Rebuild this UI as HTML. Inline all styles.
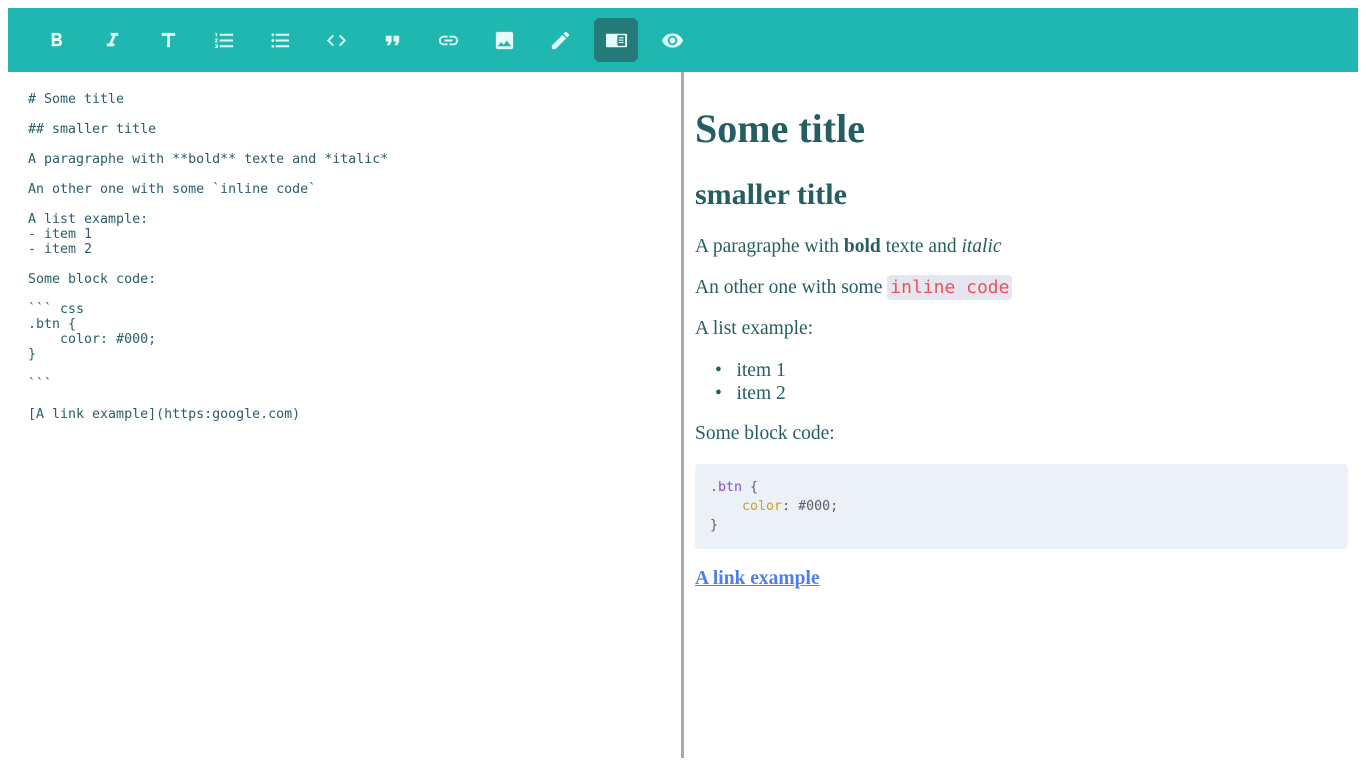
<!DOCTYPE html>
<html><head><meta charset="utf-8"><style>
html,body{margin:0;padding:0;background:#fff;width:1366px;height:768px;overflow:hidden;position:relative}
.bar{position:absolute;left:8px;top:8px;width:1350px;height:64px;background:#20b7b1}
.btn{position:absolute;top:10px;width:44px;height:44px;border-radius:6px;display:flex;align-items:center;justify-content:center}
.btn svg{width:23px;height:23px;fill:#e4fdfb}
.act{background:#247b79}
.div{position:absolute;left:681px;top:72px;width:3px;height:686px;background:#a9a9a9}
.ed{position:absolute;left:28px;top:92px;font-family:"DejaVu Sans Mono","Liberation Mono",monospace;font-size:13.3px;line-height:15px;color:#2a5e6a;white-space:pre}
.ed div{height:15px}
.pv{position:absolute;left:695px;color:#245e62;font-family:"Liberation Serif",serif;white-space:nowrap}
.mono{font-family:"DejaVu Sans Mono","Liberation Mono",monospace}
</style></head><body>
<div class="bar">
<div class="btn" style="left:26px"><svg viewBox="0 0 24 24"><path d="M15.6 10.79c.97-.67 1.65-1.77 1.65-2.79 0-2.26-1.75-4-4-4H7v14h7.04c2.09 0 3.71-1.7 3.71-3.79 0-1.52-.86-2.82-2.15-3.42zM10 6.5h3c.83 0 1.5.67 1.5 1.5s-.67 1.5-1.5 1.5h-3v-3zm3.5 9H10v-3h3.5c.83 0 1.5.67 1.5 1.5s-.67 1.5-1.5 1.5z"/></svg></div>
<div class="btn" style="left:82px"><svg viewBox="0 0 24 24"><path d="M10 4v3h2.21l-3.42 8H6v3h8v-3h-2.21l3.42-8H18V4z"/></svg></div>
<div class="btn" style="left:138px"><svg viewBox="0 0 24 24"><path d="M5 4v3h5.5v12h3V7H19V4z"/></svg></div>
<div class="btn" style="left:194px"><svg viewBox="0 0 24 24"><path d="M2 17h2v.5H3v1h1v.5H2v1h3v-4H2zm1-9h1V4H2v1h1v3zm-1 3h1.8L2 13.1v.9h3v-1H3.2L5 10.9V10H2v1zm5-6v2h14V5H7zm0 14h14v-2H7v2zm0-6h14v-2H7v2z"/></svg></div>
<div class="btn" style="left:250px"><svg viewBox="0 0 24 24"><path d="M4 10.5c-.83 0-1.5.67-1.5 1.5s.67 1.5 1.5 1.5 1.5-.67 1.5-1.5-.67-1.5-1.5-1.5zm0-6c-.83 0-1.5.67-1.5 1.5S3.17 7.5 4 7.5 5.5 6.83 5.5 6 4.83 4.5 4 4.5zm0 12c-.83 0-1.5.68-1.5 1.5s.68 1.5 1.5 1.5 1.5-.68 1.5-1.5-.67-1.5-1.5-1.5zM7 19h14v-2H7v2zm0-6h14v-2H7v2zm0-8v2h14V5H7z"/></svg></div>
<div class="btn" style="left:306px"><svg viewBox="0 0 24 24"><path d="M9.4 16.6L4.8 12l4.6-4.6L8 6l-6 6 6 6 1.4-1.4zm5.2 0l4.6-4.6-4.6-4.6L16 6l6 6-6 6-1.4-1.4z"/></svg></div>
<div class="btn" style="left:362px"><svg viewBox="0 0 24 24"><path d="M6 17h3l2-4V7H5v6h3zm8 0h3l2-4V7h-6v6h3z"/></svg></div>
<div class="btn" style="left:418px"><svg viewBox="0 0 24 24"><path d="M3.9 12c0-1.71 1.39-3.1 3.1-3.1h4V7H7c-2.76 0-5 2.24-5 5s2.24 5 5 5h4v-1.9H7c-1.71 0-3.1-1.39-3.1-3.1zM8 13h8v-2H8v2zm9-6h-4v1.9h4c1.71 0 3.1 1.39 3.1 3.1s-1.39 3.1-3.1 3.1h-4V17h4c2.76 0 5-2.24 5-5s-2.24-5-5-5z"/></svg></div>
<div class="btn" style="left:474px"><svg viewBox="0 0 24 24"><path d="M21 19V5c0-1.1-.9-2-2-2H5c-1.1 0-2 .9-2 2v14c0 1.1.9 2 2 2h14c1.1 0 2-.9 2-2zM8.5 13.5l2.5 3.01L14.5 12l4.5 6H5l3.5-4.5z"/></svg></div>
<div class="btn" style="left:530px"><svg viewBox="0 0 24 24"><path d="M3 17.25V21h3.75L17.81 9.94l-3.75-3.75L3 17.25zM20.71 7.04c.39-.39.39-1.02 0-1.41l-2.34-2.34c-.39-.39-1.02-.39-1.41 0l-1.83 1.83 3.75 3.75 1.83-1.83z"/></svg></div>
<div class="btn act" style="left:586px"><svg viewBox="0 0 24 24"><rect x="1" y="5" width="22" height="14" rx="1"/><rect x="13" y="6.5" width="8" height="11" fill="#247b79"/><rect x="14.5" y="8.5" width="5" height="1.2"/><rect x="14.5" y="11" width="5" height="1.2"/><rect x="14.5" y="13.5" width="5" height="1.2"/></svg></div>
<div class="btn" style="left:642px"><svg viewBox="0 0 24 24"><path d="M12 4.5C7 4.5 2.73 7.61 1 12c1.73 4.39 6 7.5 11 7.5s9.27-3.11 11-7.5c-1.73-4.39-6-7.5-11-7.5zM12 17c-2.76 0-5-2.24-5-5s2.24-5 5-5 5 2.24 5 5-2.24 5-5 5zm0-8c-1.66 0-3 1.34-3 3s1.34 3 3 3 3-1.34 3-3-1.34-3-3-3z"/></svg></div>
</div>
<div class="div"></div>
<div class="ed"><div># Some title</div><div></div><div>## smaller title</div><div></div><div>A paragraphe with **bold** texte and *italic*</div><div></div><div>An other one with some &#96;inline code&#96;</div><div></div><div>A list example:</div><div>- item 1</div><div>- item 2</div><div></div><div>Some block code:</div><div></div><div>&#96;&#96;&#96; css</div><div>.btn {</div><div>    color: #000;</div><div>}</div><div></div><div>&#96;&#96;&#96;</div><div></div><div>[A link example](https:google.com)</div></div>

<div class="pv" style="top:106px;font-size:40px;font-weight:bold;line-height:46px">Some title</div>
<div class="pv" style="top:178px;font-size:30px;font-weight:bold;line-height:34px">smaller title</div>
<div class="pv" style="top:235px;font-size:19.5px;line-height:24px">A paragraphe with <b>bold</b> texte and <i>italic</i></div>
<div class="pv" style="top:276px;font-size:19.5px;line-height:24px">An other one with some <span class="mono" style="background:#e5e6f0;color:#f0505a;font-size:18px;padding:2px 3px;border-radius:4px">inline code</span></div>
<div class="pv" style="top:317px;font-size:19.5px;line-height:24px">A list example:</div>
<div class="pv" style="top:359px;left:715px;font-size:19.5px;line-height:23px"><div>•&nbsp;&nbsp;&nbsp;item 1</div><div>•&nbsp;&nbsp;&nbsp;item 2</div></div>
<div class="pv" style="top:422px;font-size:19.5px;line-height:24px">Some block code:</div>
<div style="position:absolute;left:695px;top:464px;width:653px;height:85px;background:#ecf0f7;border-radius:4px"></div>
<div class="mono" style="position:absolute;left:710px;top:478px;font-size:13.3px;line-height:19px;white-space:pre;color:#5c5c6e"><span style="color:#7d4fd6">.btn</span> {
    <span style="color:#c9a21a">color</span>: #000;
}</div>
<div class="pv" style="top:567px;font-size:19.5px;line-height:24px;font-weight:bold;color:#4e7ee6;text-decoration:underline">A link example</div>
</body></html>
